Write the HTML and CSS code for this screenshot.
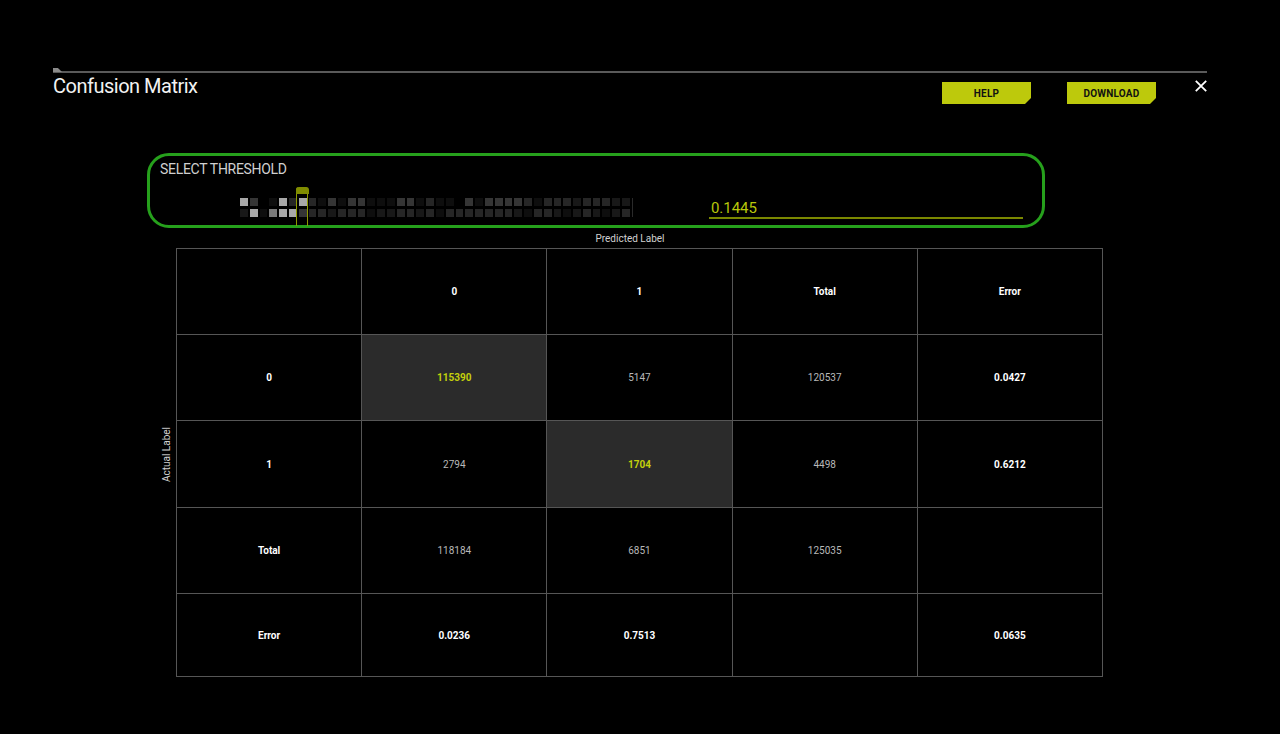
FILE: index.html
```html
<!DOCTYPE html>
<html lang="en">
<head>
<meta charset="utf-8">
<title>Confusion Matrix</title>
<link rel="stylesheet" href="styles.css">
</head>
<body>
<div class="page">
  <header class="header">
    <h1 class="title">Confusion Matrix</h1>
    <div class="actions">
      <button class="btn">HELP</button>
      <button class="btn btn-download">DOWNLOAD</button>
      <button class="close" aria-label="Close">
        <svg viewBox="0 0 12 12" width="12" height="12"><path d="M0.8 0.8 L11.2 11.2 M11.2 0.8 L0.8 11.2" stroke="#fff" stroke-width="1.8" fill="none"/></svg>
      </button>
    </div>
  </header>

  <section class="threshold">
    <div class="thr-label">SELECT THRESHOLD</div>
    <div class="thr-body">
      <div class="heat">
        <div class="heat-grid">
          <span class="c ca"></span><span class="c c4"></span><span class="c c0"></span><span class="c c1"></span><span class="c ca"></span><span class="c c3"></span><span class="c ca"></span><span class="c c3"></span><span class="c c1"></span><span class="c c4"></span><span class="c c1"></span><span class="c c4"></span><span class="c c4"></span><span class="c c1"></span><span class="c c1"></span><span class="c c1"></span><span class="c c4"></span><span class="c c4"></span><span class="c c1"></span><span class="c c3"></span><span class="c c1"></span><span class="c c1"></span><span class="c c0"></span><span class="c c4"></span><span class="c c1"></span><span class="c c4"></span><span class="c c4"></span><span class="c c4"></span><span class="c c4"></span><span class="c c3"></span><span class="c c1"></span><span class="c c3"></span><span class="c c3"></span><span class="c c3"></span><span class="c c2"></span><span class="c c3"></span><span class="c c3"></span><span class="c c3"></span><span class="c c2"></span><span class="c c2"></span>
          <span class="c c2"></span><span class="c ca"></span><span class="c c1"></span><span class="c c7"></span><span class="c ca"></span><span class="c ca"></span><span class="c c4"></span><span class="c c3"></span><span class="c c3"></span><span class="c c2"></span><span class="c c3"></span><span class="c c3"></span><span class="c c3"></span><span class="c c1"></span><span class="c c2"></span><span class="c c2"></span><span class="c c3"></span><span class="c c3"></span><span class="c c2"></span><span class="c c3"></span><span class="c c1"></span><span class="c c3"></span><span class="c c3"></span><span class="c c3"></span><span class="c c3"></span><span class="c c3"></span><span class="c c3"></span><span class="c c3"></span><span class="c c2"></span><span class="c c1"></span><span class="c c3"></span><span class="c c3"></span><span class="c c2"></span><span class="c c1"></span><span class="c c2"></span><span class="c c3"></span><span class="c c2"></span><span class="c c1"></span><span class="c c2"></span><span class="c c3"></span>
        </div>
        <div class="handle"></div>
      </div>
      <input class="thr-input" type="text" value="0.1445">
    </div>
  </section>

  <div class="axis-x">Predicted Label</div>

  <div class="matrix-area">
    <div class="axis-y">Actual Label</div>
    <table class="matrix">
      <tr class="r1">
        <td></td>
        <td class="b">0</td>
        <td class="b">1</td>
        <td class="b">Total</td>
        <td class="b">Error</td>
      </tr>
      <tr class="r2">
        <td class="b">0</td>
        <td class="hl">115390</td>
        <td>5147</td>
        <td>120537</td>
        <td class="b">0.0427</td>
      </tr>
      <tr class="r3">
        <td class="b">1</td>
        <td>2794</td>
        <td class="hl">1704</td>
        <td>4498</td>
        <td class="b">0.6212</td>
      </tr>
      <tr class="r4">
        <td class="b">Total</td>
        <td>118184</td>
        <td>6851</td>
        <td>125035</td>
        <td></td>
      </tr>
      <tr class="r5">
        <td class="b">Error</td>
        <td class="b">0.0236</td>
        <td class="b">0.7513</td>
        <td></td>
        <td class="b">0.0635</td>
      </tr>
    </table>
  </div>
</div>
</body>
</html>
```

FILE: styles.css
```css
* { box-sizing: border-box; }

html, body {
  margin: 0;
  padding: 0;
  background: #000;
}

body {
  font-family: Roboto, "Liberation Sans", sans-serif;
  color: #fff;
  height: 734px;
  overflow: hidden;
}

.page {
  margin: 0 73px 0 53px;
  padding-top: 71px;
}

/* Header */
.header {
  position: relative;
  border-top: 2px solid #5a5a5a;
  display: flex;
  justify-content: space-between;
  align-items: flex-start;
  height: 82px;
}

.header::before {
  content: "";
  position: absolute;
  left: 0;
  top: -5px;
  width: 9px;
  height: 4px;
  background: #8a8a8a;
  clip-path: polygon(0 0, 55% 0, 100% 100%, 0 100%);
}

.title {
  margin: 1px 0 0 0;
  font-size: 20px;
  line-height: 24px;
  font-weight: 400;
  color: #f2f2f2;
  letter-spacing: -0.5px;
}

.actions {
  display: flex;
  align-items: flex-start;
  padding-top: 7px;
}

.btn {
  width: 89px;
  height: 22px;
  margin-top: 2px;
  border: none;
  padding: 0;
  background: #bdc90c;
  color: #111;
  font-family: Roboto, "Liberation Sans", sans-serif;
  font-size: 10px;
  font-weight: 700;
  letter-spacing: 0.2px;
  clip-path: polygon(0 0, 100% 0, 100% calc(100% - 6px), calc(100% - 6px) 100%, 0 100%);
  cursor: pointer;
}

.btn-download {
  margin-left: 36px;
}

.close {
  margin-left: 39px;
  width: 12px;
  height: 12px;
  padding: 0;
  border: none;
  background: transparent;
  display: block;
  cursor: pointer;
}

.close svg { display: block; }

/* Threshold */
.threshold {
  margin-left: 94px;
  width: 898px;
  height: 75px;
  border: 3px solid #26a01c;
  border-radius: 22px;
  padding: 5px 0 0 10px;
}

.thr-label {
  font-size: 14px;
  line-height: 16px;
  color: #d0d0d0;
  letter-spacing: -0.3px;
}

.thr-body {
  display: flex;
  align-items: flex-start;
}

.heat {
  position: relative;
  margin-left: 80px;
  margin-top: 21px;
  padding-right: 2px;
  border-right: 1px solid #2a2a2a;
}

.heat-grid {
  display: grid;
  grid-template-columns: repeat(40, 7.8px);
  grid-template-rows: 8px 8px;
  column-gap: 2px;
  row-gap: 3px;
}

.c { display: block; }
.c0 { background: transparent; }
.c1 { background: #0e0e0e; }
.c2 { background: #181818; }
.c3 { background: #262626; }
.c4 { background: #353535; }
.c7 { background: #7a7a7a; }
.ca { background: #a8a8a8; }

.handle {
  position: absolute;
  left: 56px;
  top: -11px;
  width: 12px;
  height: 39px;
  border-left: 1.5px solid #8e9a00;
  border-right: 1.5px solid #8e9a00;
  border-radius: 3px 3px 0 0;
}

.handle::before {
  content: "";
  position: absolute;
  left: -1.5px;
  right: -1.5px;
  top: 0;
  height: 7px;
  background: #808c00;
  border-radius: 3px 3px 0 0;
}

.thr-input {
  margin-left: 76px;
  margin-top: 22px;
  width: 314px;
  height: 20px;
  padding: 0 0 0 2px;
  border: none;
  border-bottom: 2px solid #7b8800;
  background: transparent;
  color: #b9c70a;
  font-family: Roboto, "Liberation Sans", sans-serif;
  font-size: 15px;
  line-height: 18px;
  outline: none;
}

/* Axis labels */
.axis-x {
  margin-top: 5px;
  text-align: center;
  font-size: 10px;
  line-height: 12px;
  color: #d0d0d0;
}

.matrix-area {
  display: flex;
  align-items: center;
  margin-top: 3px;
  padding-left: 109px;
}

.axis-y {
  writing-mode: vertical-rl;
  transform: rotate(180deg);
  font-size: 10px;
  line-height: 10px;
  width: 10px;
  margin-right: 4px;
  margin-bottom: 16px;
  color: #d0d0d0;
  white-space: nowrap;
}

/* Matrix */
.matrix {
  width: 927px;
  table-layout: fixed;
  border-collapse: collapse;
  border: 1px solid #565656;
}

.matrix td {
  border: 1px solid #565656;
  text-align: center;
  vertical-align: middle;
  font-size: 10px;
  color: #b8b8b8;
  padding: 0;
}

.matrix td.b {
  color: #fff;
  font-weight: 700;
}

.matrix td.hl {
  background: #2b2b2b;
  color: #c3d00b;
  font-weight: 700;
}

.r1 { height: 86px; }
.r2 { height: 86px; }
.r3 { height: 87px; }
.r4 { height: 86px; }
.r5 { height: 83px; }
```
